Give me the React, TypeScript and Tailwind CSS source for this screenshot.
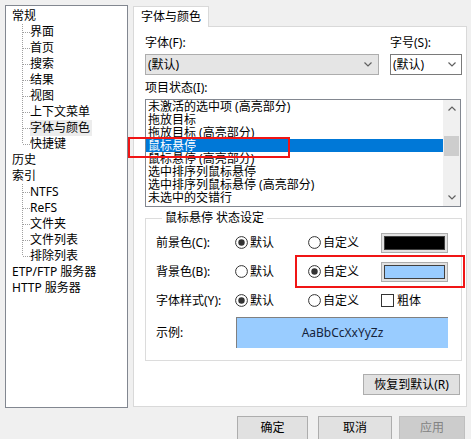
import React from "react";

type Node = { label: string; children?: string[] };

const tree: Node[] = [
  { label: "常规", children: ["界面", "首页", "搜索", "结果", "视图", "上下文菜单", "字体与颜色", "快捷键"] },
  { label: "历史" },
  { label: "索引", children: ["NTFS", "ReFS", "文件夹", "文件列表", "排除列表"] },
  { label: "ETP/FTP 服务器" },
  { label: "HTTP 服务器" },
];

const states = [
  "未激活的选中项 (高亮部分)",
  "拖放目标",
  "拖放目标 (高亮部分)",
  "鼠标悬停",
  "鼠标悬停 (高亮部分)",
  "选中排序列鼠标悬停",
  "选中排序列鼠标悬停 (高亮部分)",
  "未选中的交错行",
];

const Connector = ({ last }: { last: boolean }) => (
  <svg width="8" height="16" className="shrink-0">
    <line x1="0.5" y1="0" x2="0.5" y2={last ? 8 : 16} stroke="#a0a0a0" strokeDasharray="1 1" />
    <line x1="1" y1="8.5" x2="8" y2="8.5" stroke="#a0a0a0" strokeDasharray="1 1" />
  </svg>
);

const Chevron = ({ up = false }: { up?: boolean }) => (
  <svg width="8" height="5" viewBox="0 0 8 5">
    <path d={up ? "M0.5 4.5 L4 1 L7.5 4.5" : "M0.5 0.5 L4 4 L7.5 0.5"} fill="none" stroke="#606060" strokeWidth="1.2" />
  </svg>
);

const Radio = ({ checked, label }: { checked: boolean; label: string }) => (
  <div className="flex items-center gap-[2px]">
    <svg width="13" height="13" viewBox="0 0 13 13" className="shrink-0">
      <circle cx="6.5" cy="6.5" r="5.9" fill="#fff" stroke="#333" />
      {checked && <circle cx="6.5" cy="6.5" r="3.2" fill="#333" />}
    </svg>
    <span>{label}</span>
  </div>
);

const ColorBox = ({ color }: { color: string }) => (
  <div className="w-[67px] h-[20px] border border-[#adadad] bg-[#e1e1e1] p-[2px]">
    <div className="w-full h-full border border-[#404040]" style={{ background: color }} />
  </div>
);

export default function App() {
  return (
    <div className="relative w-[471px] h-[439px] overflow-hidden bg-[#f0f0f0] text-[12px] leading-4 text-black font-['Noto_Sans','Noto_Sans_CJK_SC',sans-serif]">
      <div className="flex h-[408px] pt-[5px] pl-[5px]">
        {/* Tree */}
        <div className="w-[123px] h-[403px] border border-[#828790] bg-white pt-[2px]">
          {tree.map((n) => (
            <div key={n.label}>
              <div className="h-4 pl-[6px] flex items-center whitespace-nowrap">{n.label}</div>
              {n.children?.map((c, i) => (
                <div key={c} className="h-4 pl-[16px] flex items-center whitespace-nowrap">
                  <Connector last={i === n.children!.length - 1} />
                  <span className={c === "字体与颜色" ? "bg-[#ececec] pr-[2px]" : ""}>{c}</span>
                </div>
              ))}
            </div>
          ))}
        </div>

        {/* Tab area */}
        <div className="ml-[5px] w-[334px] pt-[1px] flex flex-col">
          <div className="relative z-10 -mb-px w-[76px] h-[21px] border-t border-l border-r border-[#d9d9d9] bg-white flex items-center justify-center">
            字体与颜色
          </div>
          <div className="h-[381px] border border-[#d9d9d9] bg-white pl-[11px] pt-[8px] flex flex-col">
            <div className="flex">
              <div className="w-[245px]">字体(F):</div>
              <div>字号(S):</div>
            </div>
            <div className="flex mt-[3px] gap-[11px]">
              <div className="w-[234px] h-[21px] border border-[#adadad] bg-[#e5e5e5] flex items-center justify-between pl-[2px] pr-[6px]">
                <span>(默认)</span>
                <Chevron />
              </div>
              <div className="w-[72px] h-[21px] border border-[#7a7a7a] bg-white flex items-center justify-between pl-[2px] pr-[5px]">
                <span>(默认)</span>
                <Chevron />
              </div>
            </div>
            <div className="mt-[5px]">项目状态(I):</div>
            <div className="mt-[3px] w-[316px] h-[108px] border border-[#828790] flex">
              <div className="flex-1 overflow-hidden">
                {states.map((s, i) => (
                  <div
                    key={i}
                    className={
                      "h-[13px] leading-[13px] pl-[2px] whitespace-nowrap overflow-hidden " +
                      (i === 3 ? "bg-[#0078d7] text-white" : "")
                    }
                  >
                    {s}
                  </div>
                ))}
              </div>
              <div className="w-[17px] bg-[#f0f0f0] flex flex-col">
                <div className="h-[17px] flex items-center justify-center">
                  <Chevron up />
                </div>
                <div className="flex-1">
                  <div className="mt-[19px] h-[20px] mx-px bg-[#cdcdcd]" />
                </div>
                <div className="h-[17px] flex items-center justify-center">
                  <Chevron />
                </div>
              </div>
            </div>

            <fieldset className="mt-[3px] w-[317px] border border-[#dcdcdc] pl-[10px] pt-[2px] pb-[12px]">
              <legend className="ml-[6px] px-[3px] leading-4">鼠标悬停 状态设定</legend>
              <div className="grid grid-cols-[79px_73px_73px_67px] grid-rows-[29px_29px_29px] items-center">
                <span>前景色(C):</span>
                <Radio checked label="默认" />
                <Radio checked={false} label="自定义" />
                <ColorBox color="#000000" />

                <span>背景色(B):</span>
                <Radio checked={false} label="默认" />
                <Radio checked label="自定义" />
                <ColorBox color="#99ccff" />

                <span>字体样式(Y):</span>
                <Radio checked label="默认" />
                <Radio checked={false} label="自定义" />
                <div className="flex items-center gap-[3px]">
                  <span className="w-[13px] h-[13px] border border-[#333] bg-white" />
                  <span>粗体</span>
                </div>
              </div>
              <div className="flex items-center mt-[2px]">
                <span className="w-[80px]">示例:</span>
                <div className="w-[212px] h-[31px] bg-[#99ccff] border-l border-t border-[#808080] flex items-center justify-center text-[#14233a]">
                  AaBbCcXxYyZz
                </div>
              </div>
            </fieldset>

            <div className="flex justify-end pr-[6px] mt-[13px]">
              <button className="w-[97px] h-[21px] border border-[#adadad] bg-[#e1e1e1] leading-4">恢复到默认(R)</button>
            </div>
          </div>
        </div>
      </div>

      {/* Dialog buttons */}
      <div className="flex pt-[8px] pl-[237px]">
        <button className="w-[71px] h-[24px] border border-[#adadad] bg-[#e1e1e1]">确定</button>
        <button className="ml-[10px] w-[74px] h-[24px] border border-[#adadad] bg-[#e1e1e1]">取消</button>
        <button className="ml-[7px] w-[66px] h-[24px] border border-[#bfbfbf] bg-[#cccccc] text-[#838383]">应用</button>
      </div>

      {/* Annotations */}
      <div className="absolute left-[128px] top-[137px] w-[162px] h-[21px] border-2 border-[#f01515]" />
      <div className="absolute left-[295px] top-[255px] w-[170px] h-[33px] border-2 border-[#f01515]" />
    </div>
  );
}
